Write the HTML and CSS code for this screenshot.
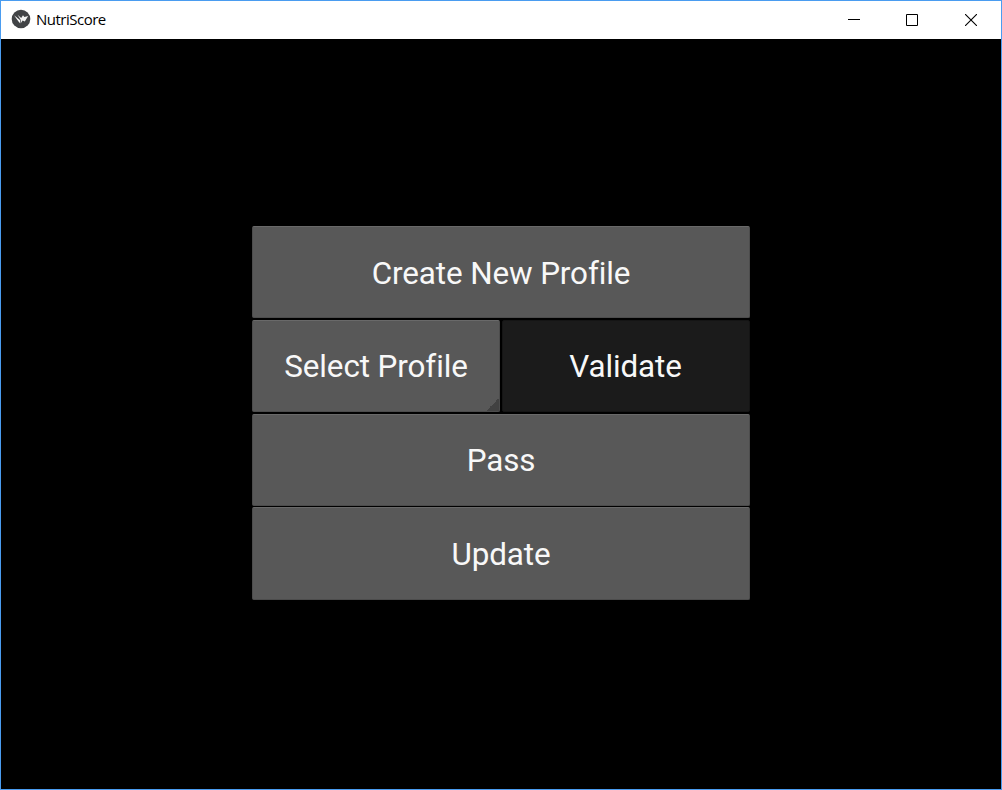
FILE: index.html
```html
<!DOCTYPE html>
<html lang="en">
<head>
<meta charset="utf-8">
<title>NutriScore</title>
<link rel="stylesheet" href="styles.css">
</head>
<body>
<div class="window">
  <header class="titlebar">
    <svg class="app-icon" width="20" height="20" viewBox="0 0 20 20">
      <circle cx="10" cy="10" r="9.3" fill="#414346"/>
      <path d="M3 6.3 9.2 11.2 8.8 14.2Z" fill="#fff"/>
      <path d="M6.6 5.8 10.2 9 12 6.2 13.4 8.1 17.2 7 13.8 12.4 11.6 11.4 9.6 14.4 9.8 11Z" fill="#f2f2f2"/>
    </svg>
    <span class="title">NutriScore</span>
    <div class="controls">
      <div class="control"><svg width="12" height="12" viewBox="0 0 12 12"><path d="M0 5.5H12" stroke="#000"/></svg></div>
      <div class="control"><svg width="12" height="12" viewBox="0 0 12 12"><path d="M.5 .5H11.5V11.5H.5Z" fill="none" stroke="#000"/></svg></div>
      <div class="control"><svg width="12" height="12" viewBox="0 0 12 12"><path d="M0 0 12 12M12 0 0 12" stroke="#000" stroke-width="1.1"/></svg></div>
    </div>
  </header>
  <main class="content">
    <div class="menu">
      <button class="button wide">Create New Profile</button>
      <button class="button spinner">Select Profile</button>
      <button class="button disabled">Validate</button>
      <button class="button wide">Pass</button>
      <button class="button wide">Update</button>
    </div>
  </main>
</div>
</body>
</html>
```
FILE: styles.css
```css
* { box-sizing: border-box; }
body { margin: 0; background: #000; }
.window {
  display: flex;
  flex-direction: column;
  width: 1002px;
  height: 790px;
  border: 1px solid #4a9cf0;
  background: #000;
}
.titlebar {
  display: flex;
  align-items: center;
  height: 38px;
  flex: none;
  padding: 0 1px 0 10px;
  background: #fff;
}
.app-icon { margin-bottom: 2px; }
.title {
  margin-left: 5px;
  padding-bottom: 3px;
  font: 15px/20px "Open Sans", "Noto Sans", sans-serif;
  letter-spacing: -0.5px;
  color: #000;
}
.controls { display: flex; margin-left: auto; }
.control {
  display: flex;
  align-items: center;
  justify-content: center;
  width: 58.5px;
  height: 38px;
}
.control svg { display: block; }
.content {
  flex: 1;
  display: flex;
  justify-content: center;
  padding-top: 187px;
}
.menu {
  display: grid;
  grid-template-columns: 248px 248px;
  grid-template-rows: repeat(3, 92px) 93px;
  gap: 1.75px 2px;
}
.button {
  margin: 0;
  padding: 3px 0 0;
  border: 1px solid #4c4c4c;
  border-top-color: #696969;
  border-radius: 2px;
  background: #585858;
  color: #f8f8f8;
  font: 31.4px/38px Roboto, sans-serif;
  letter-spacing: -0.1px;
}
.wide { grid-column: span 2; }
.spinner {
  background: linear-gradient(135deg, transparent 50%, #414141 50%) right bottom / 13px 13px no-repeat #585858;
}
.disabled {
  padding-right: 1px;
  border-color: #151515;
  background: #1b1b1b;
}
```
